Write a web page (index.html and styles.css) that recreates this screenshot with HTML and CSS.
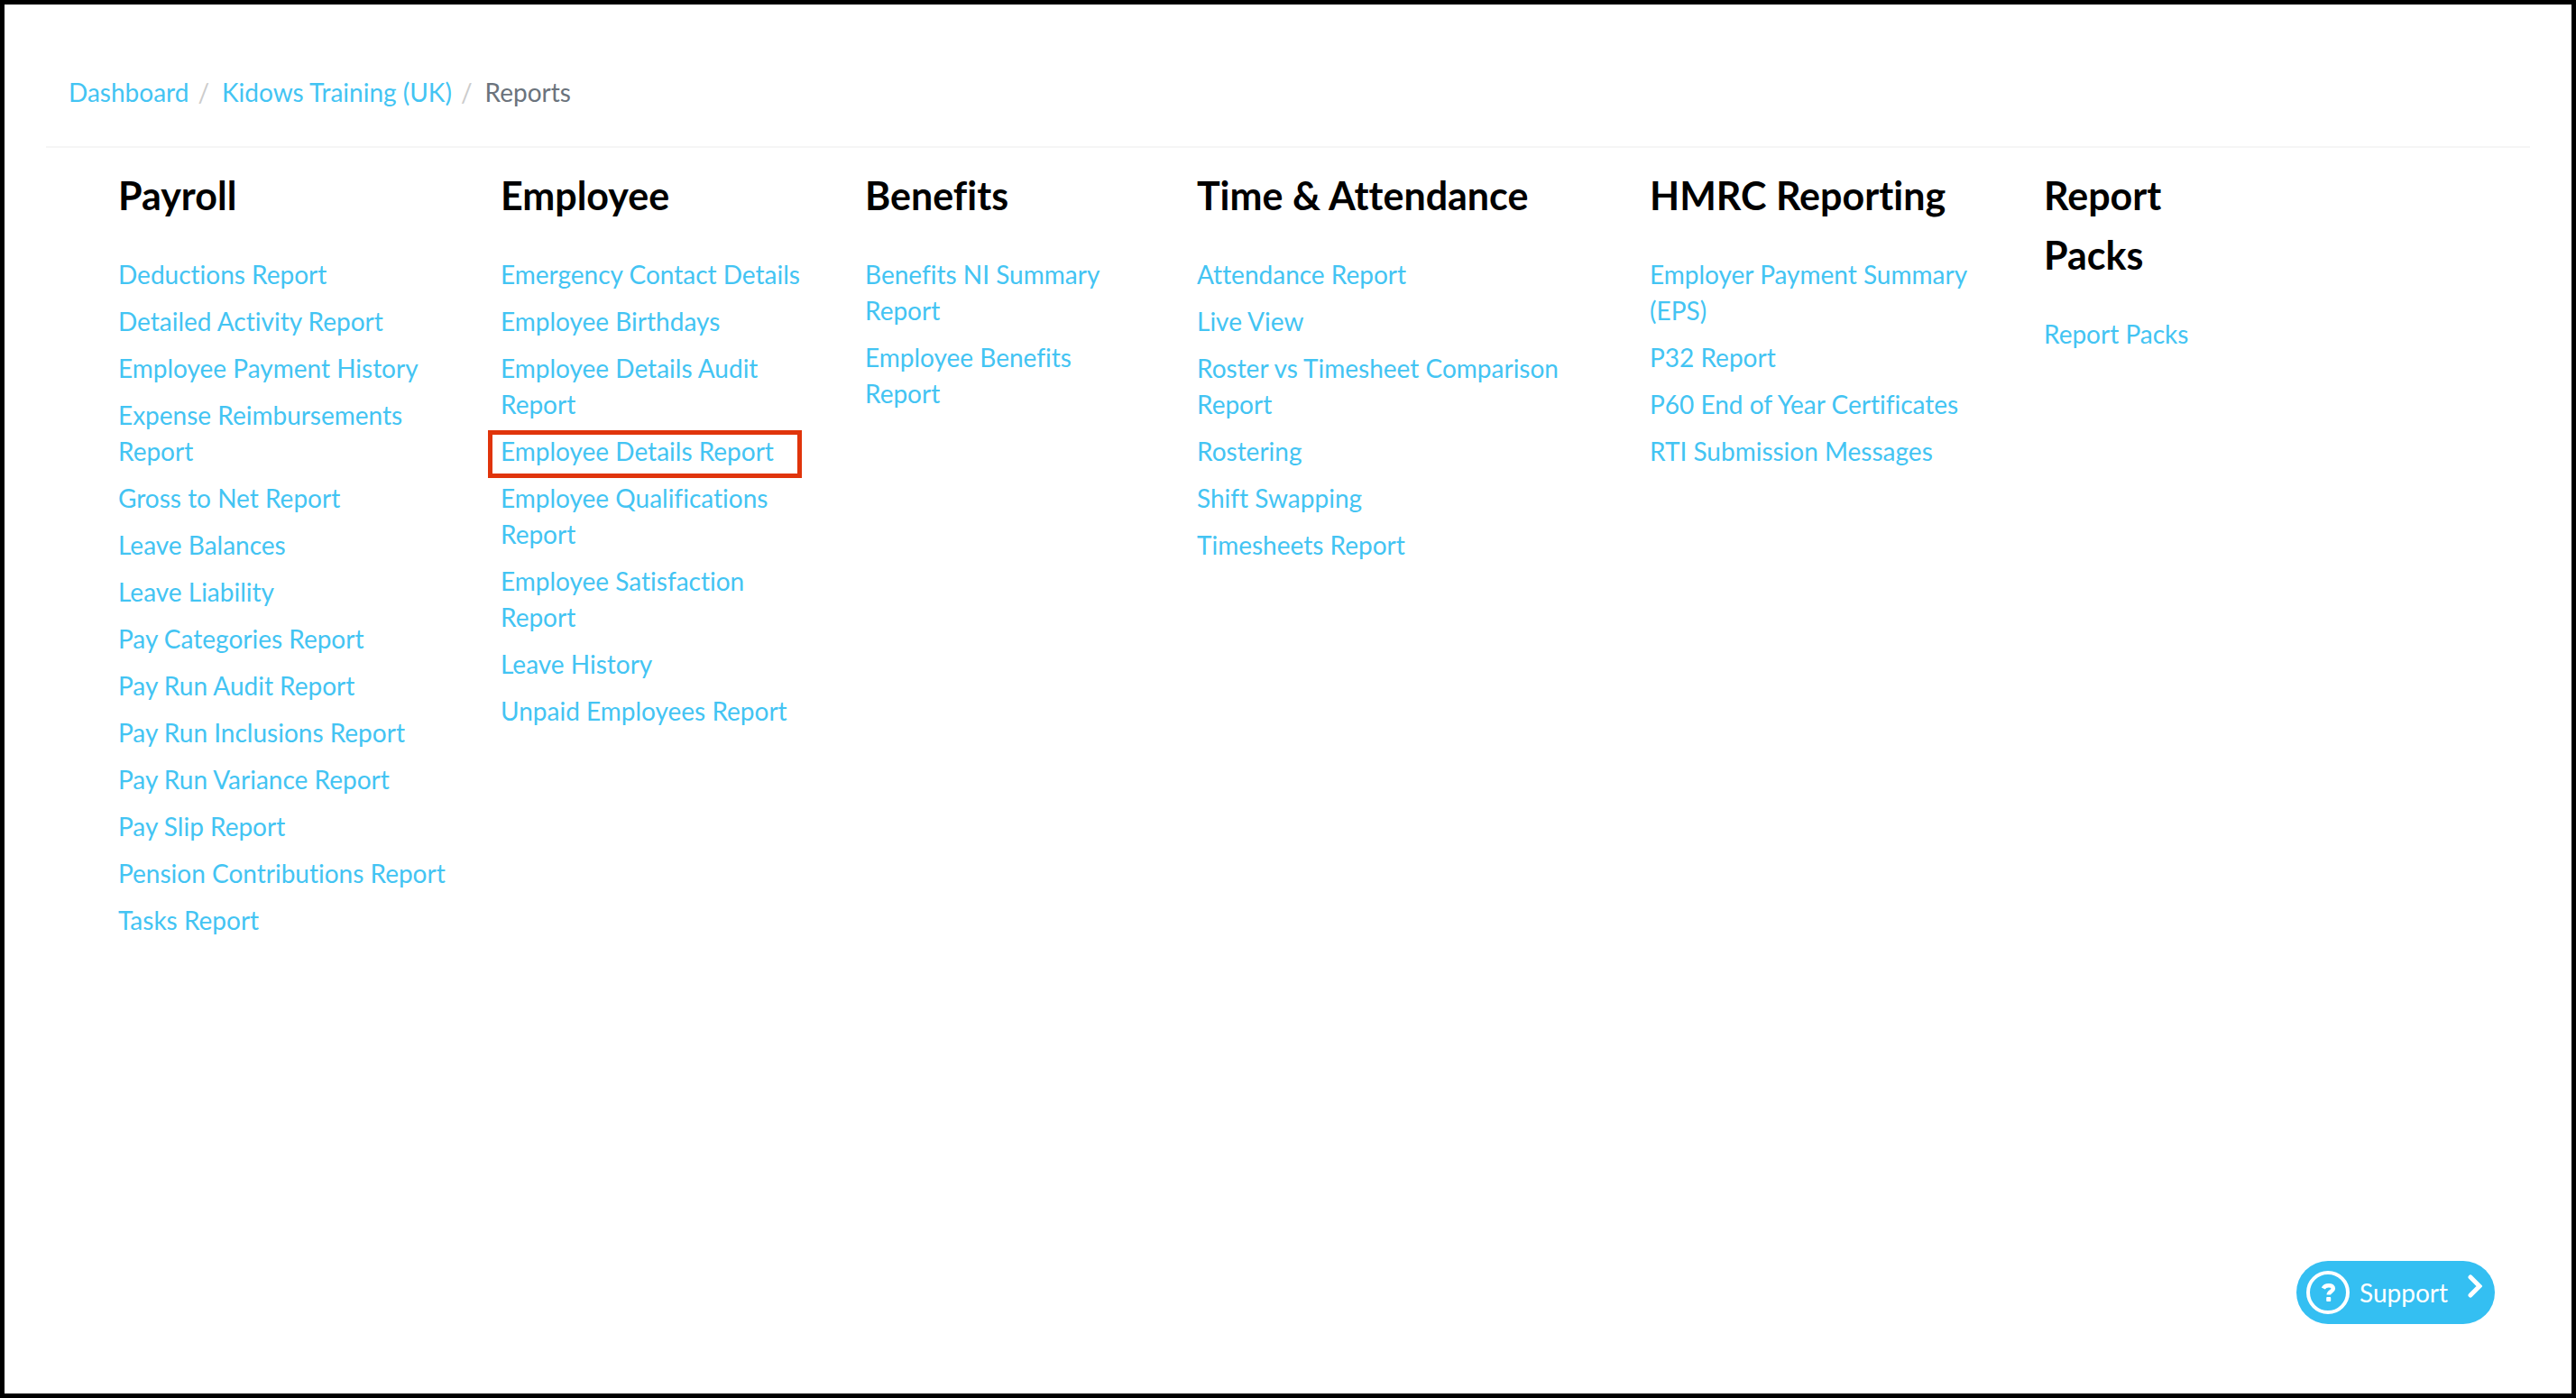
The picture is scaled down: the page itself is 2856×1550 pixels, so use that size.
FILE: index.html
```html
<!DOCTYPE html>
<html lang="en">
<head>
  <meta charset="UTF-8" />
  <title>Reports</title>
  <link rel="stylesheet" href="styles.css">
</head>

<body>
  <nav class="breadcrumb-bar" aria-label="Breadcrumb">
    <ol class="breadcrumb">
      <li><a href="#">Dashboard</a></li>
      <li><a href="#">Kidows Training (UK)</a></li>
      <li class="active">Reports</li>
    </ol>
  </nav>

  <main class="reports">
    <section class="report-group">
      <h2>Payroll</h2>
      <ul>
        <li><a href="#">Deductions Report</a></li>
        <li><a href="#">Detailed Activity Report</a></li>
        <li><a href="#">Employee Payment History</a></li>
        <li><a href="#">Expense Reimbursements Report</a></li>
        <li><a href="#">Gross to Net Report</a></li>
        <li><a href="#">Leave Balances</a></li>
        <li><a href="#">Leave Liability</a></li>
        <li><a href="#">Pay Categories Report</a></li>
        <li><a href="#">Pay Run Audit Report</a></li>
        <li><a href="#">Pay Run Inclusions Report</a></li>
        <li><a href="#">Pay Run Variance Report</a></li>
        <li><a href="#">Pay Slip Report</a></li>
        <li><a href="#">Pension Contributions Report</a></li>
        <li><a href="#">Tasks Report</a></li>
      </ul>
    </section>

    <section class="report-group">
      <h2>Employee</h2>
      <ul>
        <li><a href="#">Emergency Contact Details</a></li>
        <li><a href="#">Employee Birthdays</a></li>
        <li><a href="#">Employee Details Audit Report</a></li>
        <li class="highlight"><a href="#">Employee Details Report</a></li>
        <li><a href="#">Employee Qualifications Report</a></li>
        <li><a href="#">Employee Satisfaction Report</a></li>
        <li><a href="#">Leave History</a></li>
        <li><a href="#">Unpaid Employees Report</a></li>
      </ul>
    </section>

    <section class="report-group">
      <h2>Benefits</h2>
      <ul>
        <li><a href="#">Benefits NI Summary Report</a></li>
        <li><a href="#">Employee Benefits Report</a></li>
      </ul>
    </section>

    <section class="report-group">
      <h2>Time &amp; Attendance</h2>
      <ul>
        <li><a href="#">Attendance Report</a></li>
        <li><a href="#">Live View</a></li>
        <li><a href="#">Roster vs Timesheet Comparison Report</a></li>
        <li><a href="#">Rostering</a></li>
        <li><a href="#">Shift Swapping</a></li>
        <li><a href="#">Timesheets Report</a></li>
      </ul>
    </section>

    <section class="report-group">
      <h2>HMRC Reporting</h2>
      <ul>
        <li><a href="#">Employer Payment Summary (EPS)</a></li>
        <li><a href="#">P32 Report</a></li>
        <li><a href="#">P60 End of Year Certificates</a></li>
        <li><a href="#">RTI Submission Messages</a></li>
      </ul>
    </section>

    <section class="report-group">
      <h2>Report Packs</h2>
      <ul>
        <li><a href="#">Report Packs</a></li>
      </ul>
    </section>
  </main>

  <button type="button" class="support">
    <svg class="support-icon" viewBox="0 0 48 48" aria-hidden="true">
      <circle cx="24" cy="24" r="22" fill="none" stroke="currentColor" stroke-width="4" />
      <path d="M18.8 19.5C20.2 17 22 16.2 24.8 16.2c3.2 0 5 1.5 5 3.6 0 3.2-5 3-5 6.8" fill="none" stroke="currentColor" stroke-width="4.6" />
      <rect x="22.2" y="29" width="5" height="5" rx="1" fill="currentColor" />
    </svg>
    <span>Support</span>
    <svg class="support-arrow" viewBox="0 0 16 26" aria-hidden="true">
      <path d="M3 3l10 10L3 23" fill="none" stroke="currentColor" stroke-width="5" stroke-linecap="round" />
    </svg>
  </button>
</body>
</html>
```

FILE: styles.css
```css
* {
  box-sizing: border-box;
}

body {
  margin: 0;
  min-height: 100vh;
  padding: 0 46px;
  border: 5px solid #000;
  background-color: #fff;
  font-family: Lato, sans-serif;
  font-size: 28px;
  font-variant-ligatures: none;
  line-height: 40px;
  color: #000;
}

a {
  color: #43c4f3;
  text-decoration: none;
}

a:hover {
  text-decoration: underline;
}

ol,
ul {
  list-style: none;
  margin: 0;
  padding: 0;
}

.breadcrumb-bar {
  padding: 77px 25px 40px;
  border-bottom: 2px solid #f5f5f5;
}

.breadcrumb {
  display: flex;
}

.breadcrumb li + li::before {
  content: "/";
  padding: 0 14px 0 10px;
  color: #ccc;
}

.breadcrumb .active {
  color: #6b737c;
}

.reports {
  display: grid;
  grid-template-columns: 424fr 404fr 368fr 502fr 437fr 254fr;
  padding: 20px 285px 0 80px;
}

.report-group {
  padding-right: 56px;
}

h2 {
  margin: 0 0 34px;
  font-size: 43px;
  line-height: 66px;
}

.report-group li {
  margin-bottom: 12px;
}

.highlight {
  position: relative;
}

/* red frame round the selected report */
.highlight::after {
  content: "";
  position: absolute;
  top: -3px;
  right: 14px;
  bottom: -10px;
  left: -14px;
  border: 5px solid #e0340b;
  pointer-events: none;
}

.support {
  position: fixed;
  right: 90px;
  bottom: 82px;
  display: flex;
  align-items: center;
  width: 220px;
  height: 70px;
  padding: 0 14px 0 11px;
  border: none;
  border-radius: 35px;
  background-color: #34bff2;
  color: #fff;
  font: inherit;
  cursor: pointer;
}

.support span {
  margin: 0 auto 0 11px;
}

.support-icon {
  width: 48px;
  height: 48px;
}

.support-arrow {
  width: 16px;
  height: 26px;
  margin-bottom: 14px;
}
```
